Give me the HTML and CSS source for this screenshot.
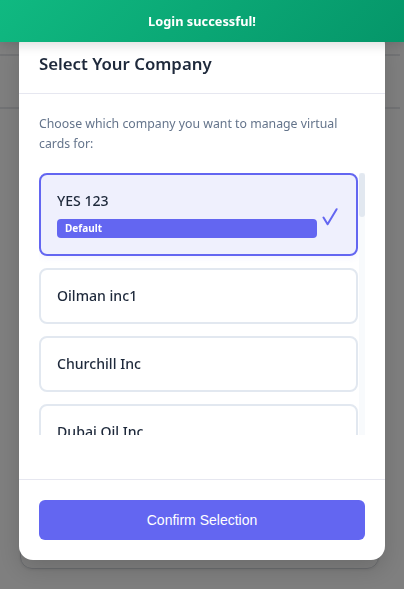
FILE: index.html
```html
<!DOCTYPE html>
<html lang="en">
<head>
<meta charset="utf-8">
<title>Select Your Company</title>
<link rel="stylesheet" href="styles.css">
</head>
<body>
<div class="page">
  <div class="page-header"></div>
  <div class="page-sub"></div>
  <div class="page-card"></div>
</div>

<div class="overlay">
  <div class="modal">
    <div class="modal-header">
      <h2 class="modal-title">Select Your Company</h2>
    </div>
    <div class="modal-body">
      <p class="modal-desc">Choose which company you want to manage virtual cards for:</p>
      <div class="list-wrap">
        <div class="company-list">
          <div class="company selected">
            <div class="company-info">
              <div class="company-name">YES 123</div>
              <div class="badge">Default</div>
            </div>
            <svg class="check" width="16" height="18" viewBox="0 0 16 18" aria-hidden="true">
              <path d="M1.5 9.5 L5.6 16.2 L14.6 1.2" fill="none" stroke="#6366f1" stroke-width="2" stroke-linecap="round" stroke-linejoin="round"/>
            </svg>
          </div>
          <div class="company"><div class="company-info"><div class="company-name">Oilman inc1</div></div></div>
          <div class="company"><div class="company-info"><div class="company-name">Churchill Inc</div></div></div>
          <div class="company"><div class="company-info"><div class="company-name">Dubai Oil Inc</div></div></div>
          <div class="company"><div class="company-info"><div class="company-name">Atlas Trading</div></div></div>
          <div class="company"><div class="company-info"><div class="company-name">Beacon Logistics</div></div></div>
          <div class="company"><div class="company-info"><div class="company-name">Cedar Holdings</div></div></div>
          <div class="company"><div class="company-info"><div class="company-name">Delta Fuels</div></div></div>
          <div class="company"><div class="company-info"><div class="company-name">Eagle Energy</div></div></div>
          <div class="company"><div class="company-info"><div class="company-name">Falcon Group</div></div></div>
          <div class="company"><div class="company-info"><div class="company-name">Gulf Partners</div></div></div>
          <div class="company"><div class="company-info"><div class="company-name">Harbor Supply</div></div></div>
          <div class="company"><div class="company-info"><div class="company-name">Iron Ridge</div></div></div>
          <div class="company"><div class="company-info"><div class="company-name">Juniper Ltd</div></div></div>
          <div class="company"><div class="company-info"><div class="company-name">Keystone Inc</div></div></div>
          <div class="company"><div class="company-info"><div class="company-name">Lakeside Co</div></div></div>
          <div class="company"><div class="company-info"><div class="company-name">Meridian LLC</div></div></div>
          <div class="company"><div class="company-info"><div class="company-name">Northstar Inc</div></div></div>
          <div class="company"><div class="company-info"><div class="company-name">Orion Fuel</div></div></div>
          <div class="company"><div class="company-info"><div class="company-name">Pioneer Oil</div></div></div>
          <div class="company"><div class="company-info"><div class="company-name">Quartz Corp</div></div></div>
          <div class="company"><div class="company-info"><div class="company-name">Redwood Inc</div></div></div>
          <div class="company"><div class="company-info"><div class="company-name">Summit Energy</div></div></div>
        </div>
        <div class="scrollbar"><div class="scroll-thumb"></div></div>
      </div>
    </div>
    <div class="modal-footer">
      <button class="confirm-btn" type="button">Confirm Selection</button>
    </div>
  </div>
</div>

<div class="toast">Login successful!</div>
</body>
</html>
```

FILE: styles.css
```css
* { box-sizing: border-box; }

html, body {
  margin: 0;
  padding: 0;
  height: 100%;
}

body {
  font-family: "Noto Sans", "Open Sans", sans-serif;
  background: #ffffff;
  overflow: hidden;
}

.page {
  display: flex;
  flex-direction: column;
  height: 100%;
}

.page-header {
  height: 56px;
  border-bottom: 2px solid #e5e7eb;
  margin-right: 4px;
}

.page-sub {
  height: 53px;
  border-bottom: 2px solid #e5e7eb;
  margin-right: 4px;
}

.page-card {
  margin: 14px 25px 0 20px;
  height: 446px;
  border: 1px solid #d4d7dd;
  border-radius: 12px;
  box-shadow: 0 1px 3px rgba(0,0,0,0.08);
}

.overlay {
  position: fixed;
  inset: 0;
  background: rgba(0, 0, 0, 0.5);
  display: flex;
  align-items: center;
  justify-content: center;
}

.modal {
  width: 366px;
  background: #ffffff;
  border-radius: 14px;
  display: flex;
  flex-direction: column;
  box-shadow: 0 10px 25px rgba(0,0,0,0.15);
}

.modal-header {
  padding: 20px 20px 16px;
  border-bottom: 1px solid #e6e7f0;
}

.modal-title {
  margin: 0;
  font-size: 16.8px;
  line-height: 27px;
  font-weight: 600;
  color: #1e293b;
}

.modal-body {
  padding: 20px;
}

.modal-desc {
  margin: 0 0 19px;
  font-size: 12.3px;
  line-height: 20px;
  color: #64748b;
}

.list-wrap {
  display: flex;
  height: 262px;
  margin-bottom: 24px;
}

.company-list {
  flex: 1;
  min-width: 0;
  overflow: hidden;
  padding-right: 1px;
}

.scrollbar {
  width: 6px;
  background: #f8fafc;
}

.scroll-thumb {
  height: 44px;
  background: #e2e8f0;
  border-radius: 3px;
}

.company {
  display: flex;
  align-items: center;
  border: 2px solid #e2e8f0;
  border-radius: 8px;
  padding: 16px;
  margin-bottom: 12px;
  background: #ffffff;
}

.company.selected {
  border-color: #6366f1;
  background: #eff0fd;
  box-shadow: 0 2px 6px rgba(99,102,241,0.08);
}

.company-info {
  flex: 1;
  min-width: 0;
}

.company-name {
  font-size: 14.1px;
  line-height: 20px;
  font-weight: 500;
  color: #1e293b;
}

.badge {
  margin-top: 8px;
  background: #6366f1;
  color: #ffffff;
  font-size: 10px;
  font-weight: 700;
  line-height: 15px;
  padding: 2px 8px;
  border-radius: 4px;
}

.check {
  margin-left: 5px;
  margin-right: 2px;
  margin-top: 5px;
  flex: none;
}

.modal-footer {
  border-top: 1px solid #e6e7f0;
  padding: 20px;
}

.confirm-btn {
  display: block;
  width: 100%;
  height: 40px;
  border: none;
  border-radius: 6px;
  background: #6366f1;
  color: #ffffff;
  font-family: "Liberation Sans", Arial, sans-serif;
  font-size: 14px;
}

.toast {
  position: fixed;
  top: 0;
  left: 0;
  right: 0;
  height: 42px;
  display: flex;
  align-items: center;
  justify-content: center;
  background: linear-gradient(135deg, #10b981, #059669);
  color: #ffffff;
  font-size: 12.8px;
  font-weight: 700;
  box-shadow: 0 4px 10px rgba(0,0,0,0.12);
}
```
